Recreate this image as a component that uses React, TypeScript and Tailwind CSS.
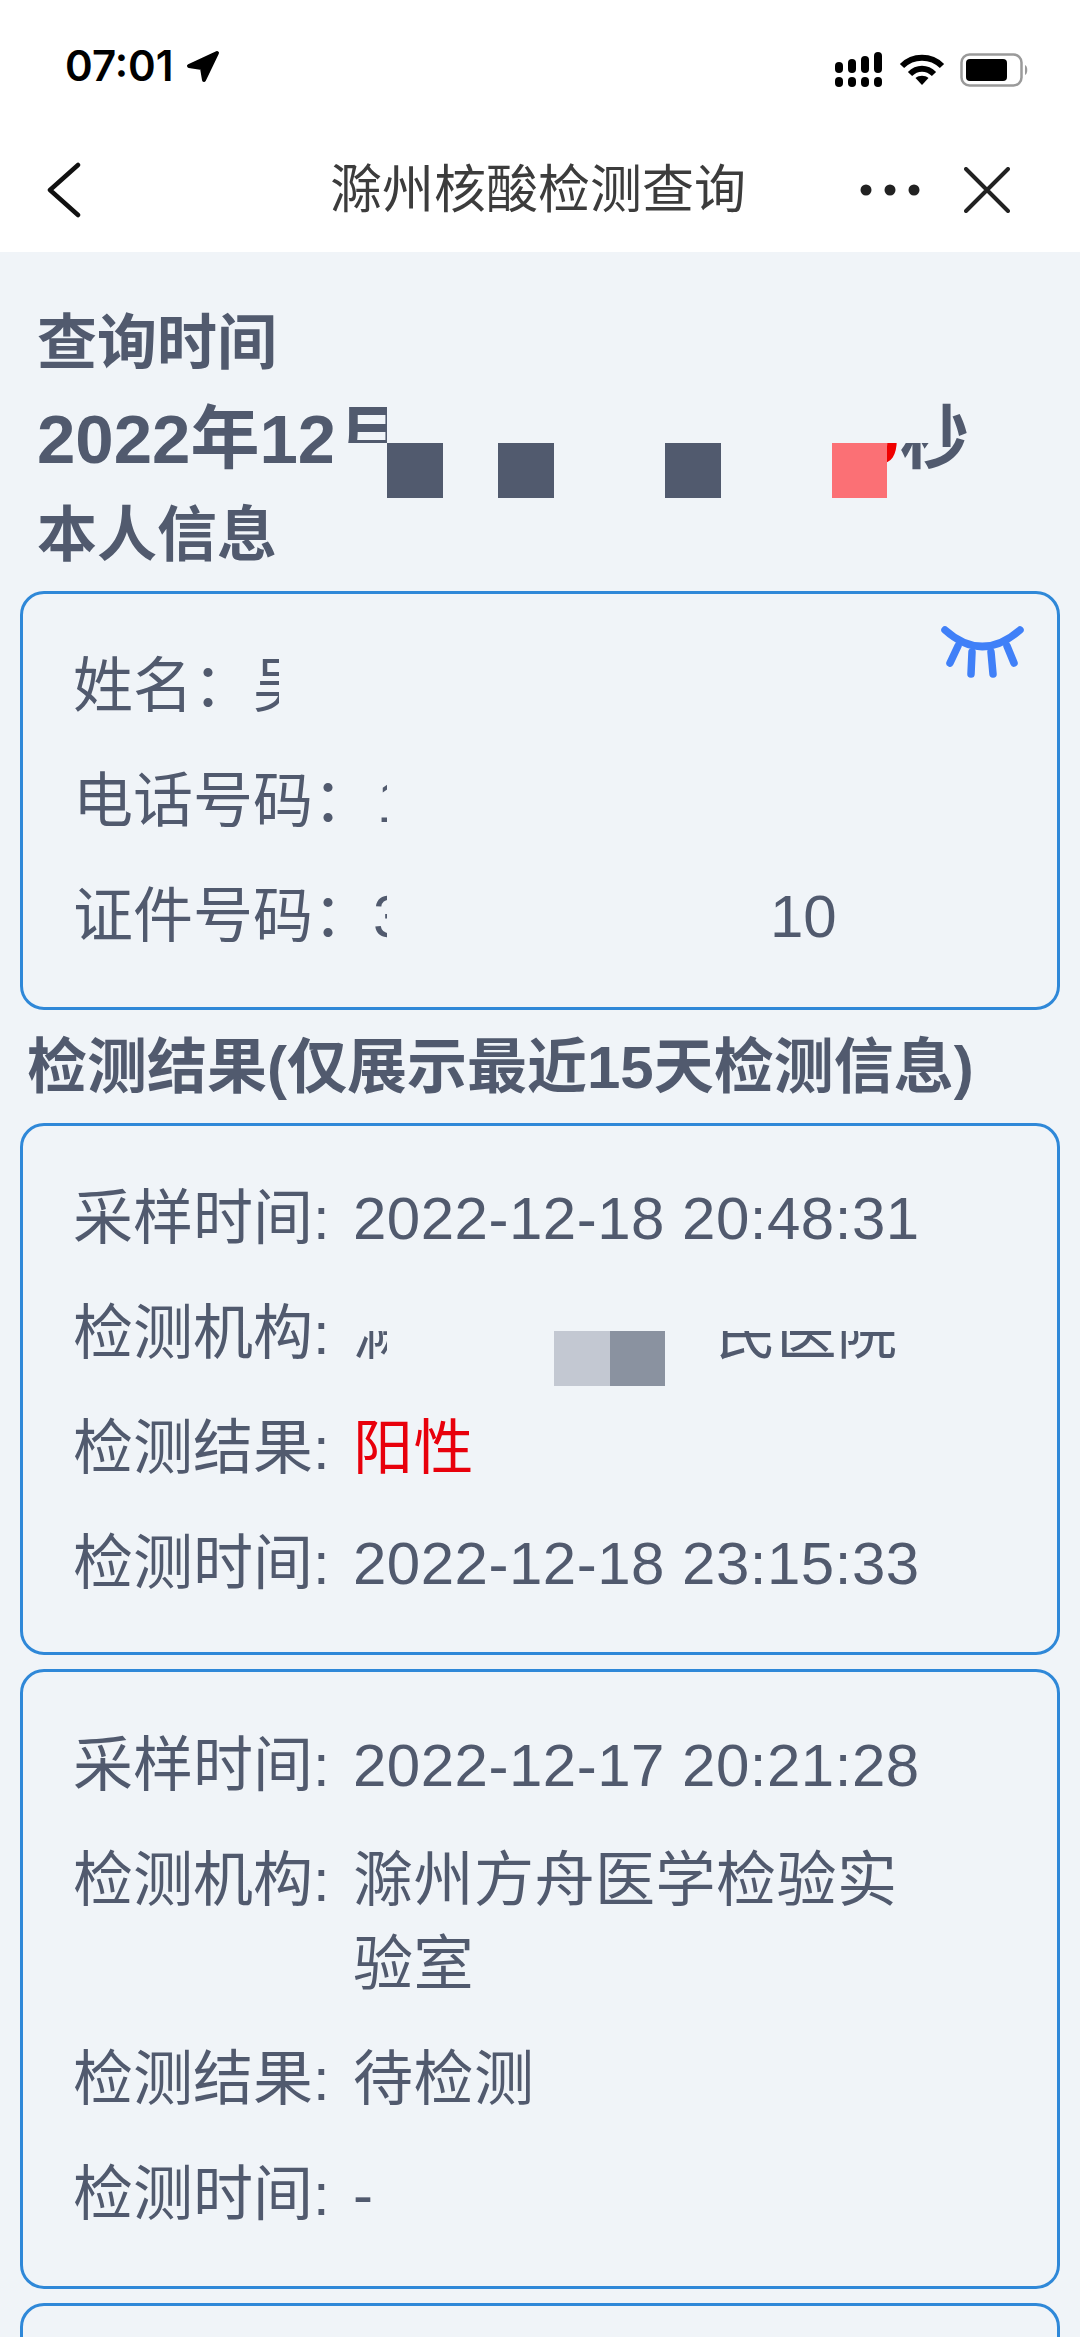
import React from 'react';

const rowClass = 'flex py-[15.5px] text-[60px] leading-[84px]';

function Row({ label, children }: { label: string; children: React.ReactNode }) {
  return (
    <div className={rowClass}>
      <span className="w-[280px] shrink-0">{label}:</span>
      <div className="min-w-0 flex-1 tracking-[0.5px]">{children}</div>
    </div>
  );
}

function StatusBar() {
  return (
    <div className="flex h-[92px] items-end justify-between pb-[4px] pl-[65px] pr-[50px] text-black">
      <div className="flex items-center gap-[12px]">
        <span className="font-['Inter',sans-serif] text-[42px] font-semibold leading-[44px]">07:01</span>
        <svg width="34" height="33" viewBox="0 0 34 33">
          <path d="M31 3 L3 16 L16 18 L18 30 Z" fill="#000" stroke="#000" strokeWidth="4" strokeLinejoin="round" />
        </svg>
      </div>
      <div className="flex items-center gap-[15px]">
        <svg width="50" height="36" viewBox="0 0 50 36">
          <rect x="1" y="10" width="8" height="11" rx="4" />
          <rect x="14" y="7" width="8" height="14" rx="4" />
          <rect x="27" y="4" width="8" height="17" rx="4" />
          <rect x="40" y="0" width="8" height="21" rx="4" />
          <rect x="1" y="25" width="8" height="10" rx="4" />
          <rect x="14" y="25" width="8" height="10" rx="4" />
          <rect x="27" y="25" width="8" height="10" rx="4" />
          <rect x="40" y="25" width="8" height="10" rx="4" />
        </svg>
        <svg width="46" height="32" viewBox="0 0 46 32" fill="none" stroke="#000" strokeWidth="6">
          <path d="M3 12 C14 1 32 1 43 12" />
          <path d="M11 20 C18 13 28 13 35 20" />
          <path d="M23 31 L16.5 24 C20 21 26 21 29.5 24 Z" fill="#000" stroke="none" />
        </svg>
        <svg width="70" height="34" viewBox="0 0 70 34">
          <rect x="1.5" y="1.5" width="60" height="31" rx="8" fill="none" stroke="#9a9a9a" strokeWidth="2.5" />
          <rect x="6" y="6" width="41" height="22" rx="4" fill="#000" />
          <path d="M65 12 C68 13 68 21 65 22 Z" fill="#9a9a9a" />
        </svg>
      </div>
    </div>
  );
}

function NavBar() {
  return (
    <div className="flex h-[160px] items-center pl-[47px] pr-[70px] pt-[36px]">
      <svg width="34" height="56" viewBox="0 0 34 56" fill="none" stroke="#111" strokeWidth="4.5" strokeLinecap="round" strokeLinejoin="round">
        <path d="M31 3 L3 28 L31 53" />
      </svg>
      <div className="ml-[249px] flex-1 text-[52px] leading-[60px] text-[#3c3c3c]">滁州核酸检测查询</div>
      <div className="flex items-center gap-[44px]">
        <svg width="60" height="12" viewBox="0 0 60 12" fill="#222">
          <circle cx="6" cy="6" r="5.5" />
          <circle cx="30" cy="6" r="5.5" />
          <circle cx="54" cy="6" r="5.5" />
        </svg>
        <svg width="46" height="46" viewBox="0 0 46 46" stroke="#222" strokeWidth="4" strokeLinecap="round">
          <path d="M2 2 L44 44 M44 2 L2 44" />
        </svg>
      </div>
    </div>
  );
}

function Card({ children, className }: { children: React.ReactNode; className?: string }) {
  return (
    <div className={`relative rounded-[24px] border-[3px] border-[#2f88d8] pl-[50px] ${className ?? ''}`}>
      {children}
    </div>
  );
}

export default function App() {
  return (
    <div className="h-[2337px] overflow-hidden bg-white font-['Liberation_Sans','Noto_Sans_CJK_SC',sans-serif]">
      <StatusBar />
      <NavBar />

      <main className="h-[2085px] bg-[#f0f4f8] px-[20px] pt-[44px] text-[#515a6e]">
        <div className="relative">
          <h2 className="ml-[17px] text-[60px] font-bold leading-[96px]">查询时间</h2>

          {/* 查询日期，中间部分打码 */}
          <div className="ml-[17px] flex text-[69px] font-bold leading-[96px]">
            <span>2022年12月</span>
            <span className="w-[456px]" />
            <span className="text-[#f00000]">0</span>
            <span>秒</span>
          </div>
          <div className="absolute left-[367px] top-[91px] h-[56px] w-[555px] bg-[#f0f4f8]" />
          <div className="absolute left-[312px] top-[147px] flex h-[55px] w-[555px] bg-[#f0f4f8]">
            <div className="ml-[55px] w-[56px] bg-[#515a6e]" />
            <div className="ml-[55px] w-[56px] bg-[#515a6e]" />
            <div className="ml-[111px] w-[56px] bg-[#515a6e]" />
            <div className="ml-[111px] w-[55px] bg-[#fb7075]" />
          </div>

          <h2 className="relative ml-[17px] text-[60px] font-bold leading-[96px]">本人信息</h2>
        </div>

        <Card className="mt-[7px] h-[419px] pt-[35px]">
          <svg className="absolute right-[11px] top-[15px]" width="127" height="80" viewBox="0 0 127 80" fill="none" stroke="#4080f8" strokeWidth="7.5" strokeLinecap="round">
            <path d="M26 21 Q63 54 101 21" />
            <path d="M39 37 L31 54 M53 43 L52 65 M72 43 L74 65 M88 37 L95 54" />
          </svg>
          <div className={rowClass}>
            <span className="w-[180px] shrink-0">姓名：</span>
            <span className="w-[26px] overflow-hidden">吴</span>
          </div>
          <div className={rowClass}>
            <span className="w-[300px] shrink-0">电话号码：</span>
            <span className="w-[14px] overflow-hidden pl-[4px]">1</span>
          </div>
          <div className={rowClass}>
            <span className="w-[300px] shrink-0">证件号码：</span>
            <span className="w-[14px] overflow-hidden">3</span>
            <span className="ml-[383px]">10</span>
          </div>
        </Card>

        <h2 className="ml-[7px] mt-[16px] mb-[13px] text-[60px] font-bold leading-[84px] whitespace-nowrap">
          检测结果(仅展示最近15天检测信息)
        </h2>

        <div className="flex flex-col gap-[14px]">
          <Card className="h-[532px] pt-[35px]">
            <Row label="采样时间">2022-12-18 20:48:31</Row>
            <Row label="检测机构">
              <div className="flex">
                <span className="w-[34px] overflow-hidden">滁</span>
                <span className="ml-[329px]">民医院</span>
              </div>
            </Row>
            <Row label="检测结果"><span className="text-[#e8000b]">阳性</span></Row>
            <Row label="检测时间">2022-12-18 23:15:33</Row>
            {/* 机构名打码 */}
            <div className="absolute left-[330px] top-[149px] h-[111px] w-[570px]">
              <div className="h-[56px] bg-[#f0f4f8]" />
              <div className="flex h-[55px]">
                <div className="ml-[201px] w-[56px] bg-[#c3c8d2]" />
                <div className="w-[55px] bg-[#8a92a0]" />
              </div>
            </div>
          </Card>

          <Card className="h-[620px] pt-[36px]">
            <Row label="采样时间">2022-12-17 20:21:28</Row>
            <Row label="检测机构">
              滁州方舟医学检验实
              <br />
              验室
            </Row>
            <Row label="检测结果">待检测</Row>
            <Row label="检测时间">-</Row>
          </Card>

          <Card className="h-[200px]">
            <span />
          </Card>
        </div>
      </main>
    </div>
  );
}
